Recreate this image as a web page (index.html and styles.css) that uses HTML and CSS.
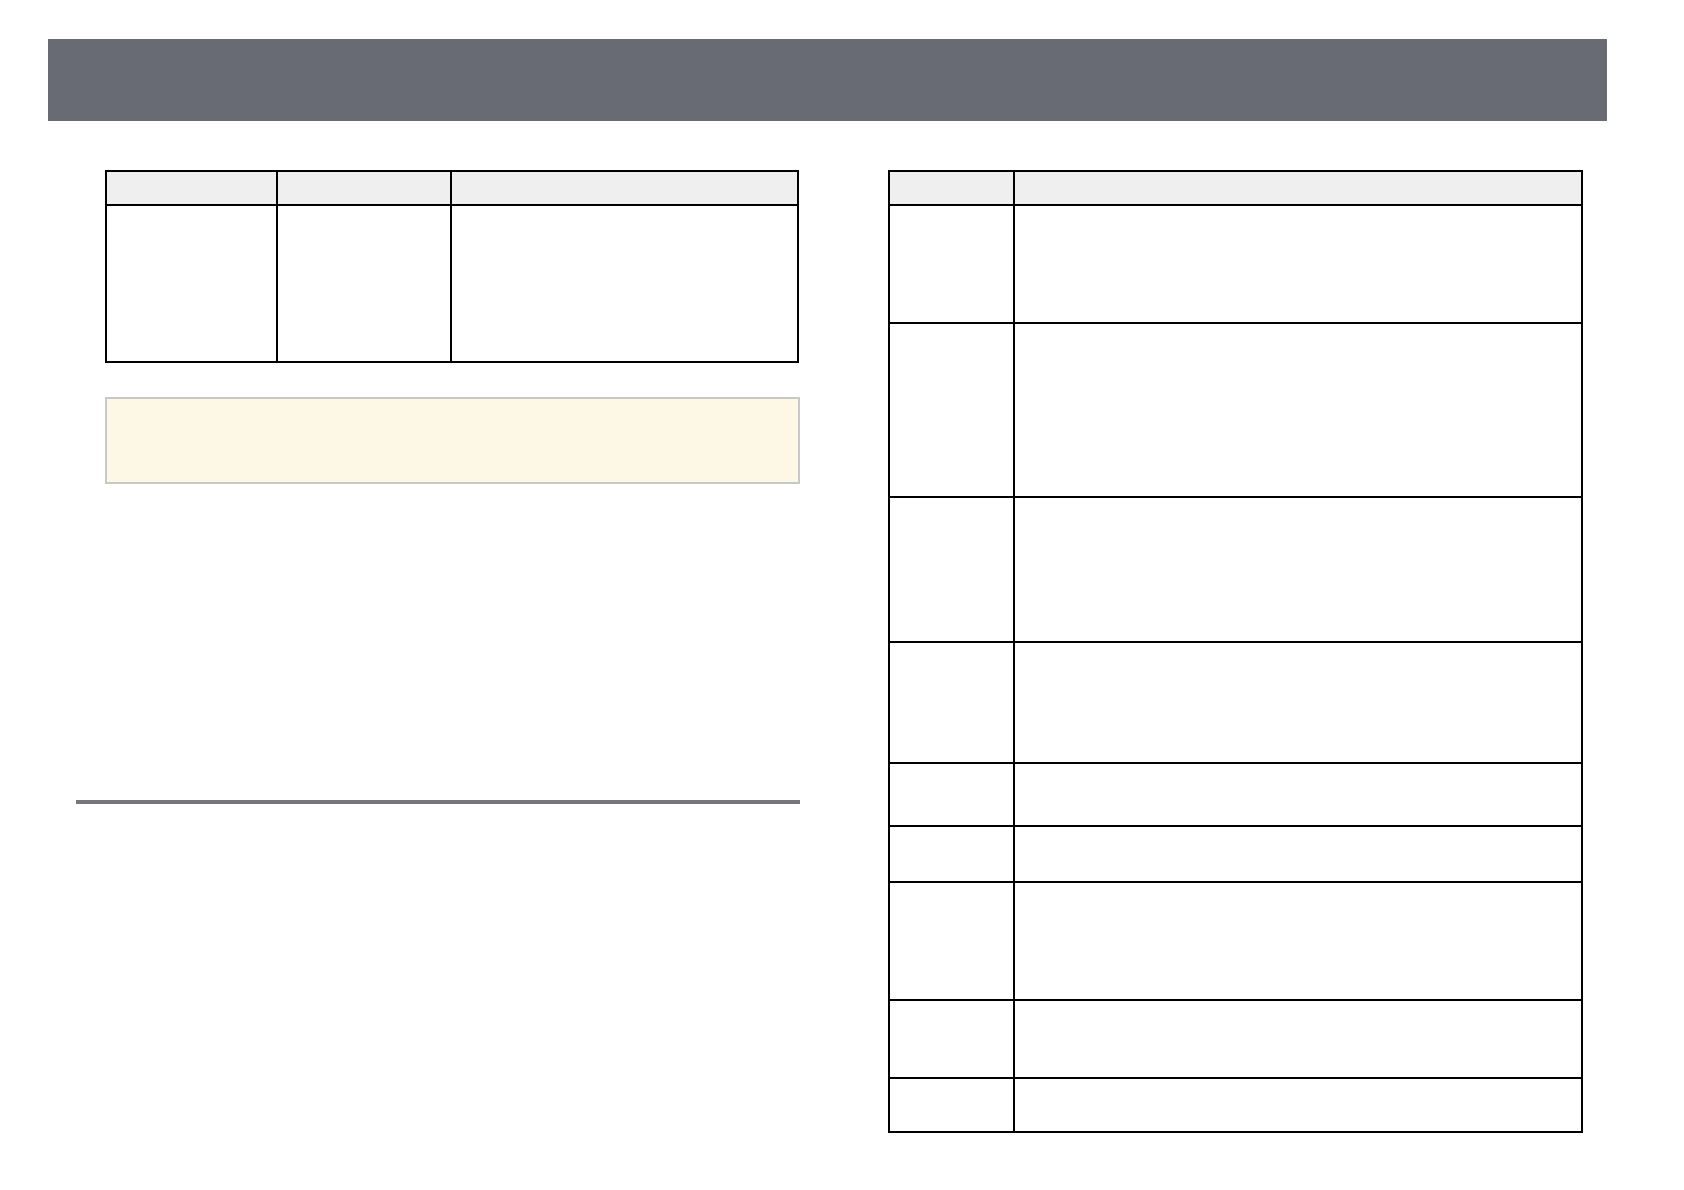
FILE: index.html
```html
<!DOCTYPE html>
<html lang="en">
<head>
<meta charset="utf-8">
<title>Page</title>
<link rel="stylesheet" href="styles.css">
</head>
<body>
<header class="topbar"></header>
<main class="content">
  <section class="col-left">
    <div class="tbl tbl-left">
      <div class="row head">
        <div class="cell c1"></div>
        <div class="cell c2"></div>
        <div class="cell c3"></div>
      </div>
      <div class="row last" style="height:155px">
        <div class="cell c1"></div>
        <div class="cell c2"></div>
        <div class="cell c3"></div>
      </div>
    </div>
    <div class="note"></div>
    <div class="rule"></div>
  </section>
  <section class="col-right">
    <div class="tbl tbl-right">
      <div class="row head">
        <div class="cell k"></div>
        <div class="cell v"></div>
      </div>
      <div class="row" style="height:118px"><div class="cell k"></div><div class="cell v"></div></div>
      <div class="row" style="height:174px"><div class="cell k"></div><div class="cell v"></div></div>
      <div class="row" style="height:145px"><div class="cell k"></div><div class="cell v"></div></div>
      <div class="row" style="height:121px"><div class="cell k"></div><div class="cell v"></div></div>
      <div class="row" style="height:63px"><div class="cell k"></div><div class="cell v"></div></div>
      <div class="row" style="height:56px"><div class="cell k"></div><div class="cell v"></div></div>
      <div class="row" style="height:118px"><div class="cell k"></div><div class="cell v"></div></div>
      <div class="row" style="height:78px"><div class="cell k"></div><div class="cell v"></div></div>
      <div class="row last" style="height:52px"><div class="cell k"></div><div class="cell v"></div></div>
    </div>
  </section>
</main>
</body>
</html>
```

FILE: styles.css
```css
* { box-sizing: border-box; }
html, body {
  margin: 0;
  padding: 0;
  background: #ffffff;
  font-family: "Liberation Sans", Arial, sans-serif;
}
.topbar {
  margin: 39px 0 0 48px;
  width: 1559px;
  height: 82px;
  background: #686a74;
}
.content {
  display: flex;
  align-items: flex-start;
}
.col-left {
  margin-left: 76px;
  width: 724px;
  display: flex;
  flex-direction: column;
}
.col-right {
  margin-left: 88px;
  width: 695px;
}
.tbl {
  margin-top: 49px;
  border: 2px solid #000;
  display: flex;
  flex-direction: column;
}
.tbl-left {
  margin-left: 29px;
  width: 694px;
}
.tbl-right {
  width: 695px;
}
.row {
  display: flex;
  border-bottom: 2px solid #000;
}
.row.last { border-bottom: none; }
.row.head {
  height: 34px;
  background: #efefef;
}
.cell {
  height: 100%;
}
.cell + .cell { border-left: 2px solid #000; }
.tbl-left .c1 { width: 169px; }
.tbl-left .c2 { width: 174px; }
.tbl-left .c3 { flex: 1; }
.tbl-right .k { width: 123px; }
.tbl-right .v { flex: 1; }
.note {
  margin-top: 34px;
  margin-left: 29px;
  width: 695px;
  height: 87px;
  background: #fdf7e6;
  border: 2px solid #c8c8c8;
}
.rule {
  margin-top: 316px;
  width: 724px;
  height: 4px;
  background: #77767b;
}
```
